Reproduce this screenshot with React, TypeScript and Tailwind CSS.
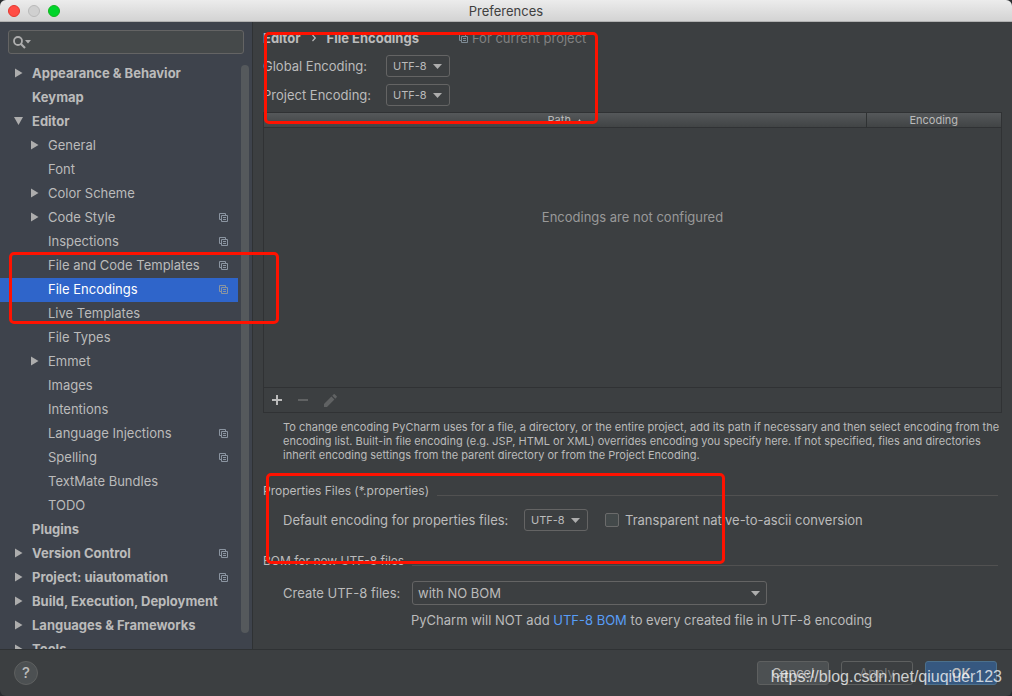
import { useState } from 'react'
import { clsx } from 'clsx'

type TreeItem = {
  title: string
  level: 0 | 1
  arrow?: 'open' | 'closed'
  shared?: boolean
}

const treeItems: TreeItem[] = [
  { title: 'Appearance & Behavior', level: 0, arrow: 'closed' },
  { title: 'Keymap', level: 0 },
  { title: 'Editor', level: 0, arrow: 'open' },
  { title: 'General', level: 1, arrow: 'closed' },
  { title: 'Font', level: 1 },
  { title: 'Color Scheme', level: 1, arrow: 'closed' },
  { title: 'Code Style', level: 1, arrow: 'closed', shared: true },
  { title: 'Inspections', level: 1, shared: true },
  { title: 'File and Code Templates', level: 1, shared: true },
  { title: 'File Encodings', level: 1, shared: true },
  { title: 'Live Templates', level: 1 },
  { title: 'File Types', level: 1 },
  { title: 'Emmet', level: 1, arrow: 'closed' },
  { title: 'Images', level: 1 },
  { title: 'Intentions', level: 1 },
  { title: 'Language Injections', level: 1, shared: true },
  { title: 'Spelling', level: 1, shared: true },
  { title: 'TextMate Bundles', level: 1 },
  { title: 'TODO', level: 1 },
  { title: 'Plugins', level: 0 },
  { title: 'Version Control', level: 0, arrow: 'closed', shared: true },
  { title: 'Project: uiautomation', level: 0, arrow: 'closed', shared: true },
  { title: 'Build, Execution, Deployment', level: 0, arrow: 'closed' },
  { title: 'Languages & Frameworks', level: 0, arrow: 'closed' },
  { title: 'Tools', level: 0, arrow: 'closed' },
]

export default function App() {
  return (
    <div className="relative h-screen bg-[#2a2d30] font-['Inter','Liberation_Sans',sans-serif] text-[13px] leading-4 text-[#bbbbbb]">
      <div className="flex h-full flex-col overflow-hidden rounded-md bg-[#3c3f41]">
        <TitleBar />
        <div className="flex min-h-0 flex-1">
          <Sidebar />
          <EncodingSettings />
        </div>
        <Footer />
      </div>

      {/* Highlight marks */}
      <div className="pointer-events-none absolute top-[32px] left-[264px] h-[92px] w-[334px] rounded-[5px] border-3 border-[#ff1200]" />
      <div className="pointer-events-none absolute top-[252px] left-[9px] h-[72px] w-[270px] rounded-[5px] border-3 border-[#ff1200]" />
      <div className="pointer-events-none absolute top-[473px] left-[266px] h-[91px] w-[459px] rounded-[5px] border-3 border-[#ff1200]" />
      <span className="pointer-events-none absolute right-[10px] bottom-[9px] font-['Liberation_Sans',sans-serif] text-base leading-5 text-white/75">
        https://blog.csdn.net/qiuqiuer123
      </span>
    </div>
  )
}

function TitleBar() {
  return (
    <header className="relative flex h-[22px] shrink-0 items-center justify-center border-b border-[#b1b1b1] bg-linear-to-b from-[#ececec] to-[#d3d3d3] text-[#404040]">
      <div className="absolute left-2 flex gap-2">
        <button aria-label="Close" className="size-3 rounded-full border border-[#e2382f] bg-[#ff4d45]" />
        <button aria-label="Minimize" className="size-3 rounded-full border border-[#b9b9b9] bg-[#d0d0d0]" />
        <button aria-label="Zoom" className="size-3 rounded-full border border-[#12b41f] bg-[#00d52b]" />
      </div>
      <h1>Preferences</h1>
    </header>
  )
}

function Sidebar() {
  const [selected, setSelected] = useState('File Encodings')

  return (
    <aside className="relative flex w-[253px] shrink-0 flex-col border-r border-[#2f3234] bg-[#3e434c]">
      <div className="px-2 pt-2">
        <label className="flex h-6 w-[236px] items-center rounded-[3px] border border-[#646464] bg-[#45494a] pl-1">
          <SearchIcon />
          <input type="text" aria-label="Search settings" className="min-w-0 flex-1 bg-transparent px-1 outline-none" />
        </label>
      </div>
      <nav className="mt-2 min-h-0 flex-1 overflow-hidden">
        {treeItems.map((item) => {
          const isSelected = item.title === selected
          return (
            <button
              key={item.title}
              onClick={() => setSelected(item.title)}
              className={clsx(
                'flex h-6 w-[238px] items-center pr-2.5 pb-0.5 text-left whitespace-nowrap',
                item.level === 0 ? 'pl-3.5 font-bold' : 'pl-[30px]',
                isSelected && 'bg-[#2f65ca] text-white',
              )}
            >
              <span className="flex w-[18px] shrink-0">{item.arrow && <TreeArrow open={item.arrow === 'open'} />}</span>
              <span className="flex-1">{item.title}</span>
              {item.shared && <ProjectIcon className="text-[#8b95a1]" />}
            </button>
          )
        })}
      </nav>
      <div className="absolute top-[43px] right-[3px] bottom-4 w-2 rounded-full bg-[#55595c]" />
    </aside>
  )
}

function EncodingSettings() {
  return (
    <main className="flex min-w-0 flex-1 flex-col pt-2 pr-2.5 pb-[21px] pl-2.5">
      <div className="flex shrink-0 items-center font-bold">
        <span>Editor</span>
        <svg width="6" height="8" viewBox="0 0 6 8" className="mx-2.5" fill="none" stroke="#bbbbbb" strokeWidth="1.2">
          <path d="M1.5 1 4.3 4 1.5 7" />
        </svg>
        <h2>File Encodings</h2>
        <span className="ml-10 flex items-center gap-1 font-normal text-[#808080]">
          <ProjectIcon className="text-[#7e8b95]" />
          For current project
        </span>
      </div>

      <div className="mt-[9px] grid shrink-0 grid-cols-[123px_auto] items-center justify-start gap-y-[7px]">
        <label htmlFor="global-encoding">Global Encoding:</label>
        <EncodingSelect id="global-encoding" />
        <label htmlFor="project-encoding">Project Encoding:</label>
        <EncodingSelect id="project-encoding" />
      </div>

      <div className="mt-1.5 flex min-h-0 flex-1 flex-col border border-[#303234]">
        <div className="min-h-0 flex-1">
          <table className="h-full w-full table-fixed border-collapse">
            <thead className="text-[11px] leading-[13px]">
              <tr className="h-3.5 border-b border-[#303234] bg-linear-to-b from-[#55585a] to-[#414445]">
                <th className="border-r border-[#2f3233] p-0 pt-px font-normal">
                  <span className="inline-flex items-center gap-1.5">
                    Path
                    <svg width="5" height="4" viewBox="0 0 5 4" fill="#bbbbbb">
                      <path d="M2.5 0 5 4H0z" />
                    </svg>
                  </span>
                </th>
                <th className="w-[135px] p-0 pt-px font-normal">Encoding</th>
              </tr>
            </thead>
            <tbody>
              <tr>
                <td colSpan={2} className="p-0 pt-[81px] text-center align-top text-[#999999]">
                  Encodings are not configured
                </td>
              </tr>
            </tbody>
          </table>
        </div>
        <div className="flex h-[25px] shrink-0 items-center gap-4 border-t border-[#303234] pl-2">
          <button aria-label="Add">
            <svg width="10" height="10" viewBox="0 0 10 10" fill="#bbbbbb">
              <path d="M4 0h2v4h4v2H6v4H4V6H0V4h4z" />
            </svg>
          </button>
          <button aria-label="Remove" disabled>
            <svg width="10" height="10" viewBox="0 0 10 10" fill="#606263">
              <path d="M0 4h10v2H0z" />
            </svg>
          </button>
          <button aria-label="Edit" disabled>
            <svg width="13" height="13" viewBox="0 0 13 13" fill="#606263">
              <path d="M0 10 7.4 2.6l3 3L3 13H0zM8.3 1.7 9.7.3q.5-.5 1 0l2 2q.5.5 0 1l-1.4 1.4z" />
            </svg>
          </button>
        </div>
      </div>

      <p className="mt-[7px] shrink-0 pl-5 text-[11px] leading-[14px] whitespace-nowrap">
        To change encoding PyCharm uses for a file, a directory, or the entire project, add its path if necessary and then select encoding from the
        <br />
        encoding list. Built-in file encoding (e.g. JSP, HTML or XML) overrides encoding you specify here. If not specified, files and directories
        <br />
        inherit encoding settings from the parent directory or from the Project Encoding.
      </p>

      <SectionTitle className="mt-[21px]">Properties Files (*.properties)</SectionTitle>
      <div className="mt-2.5 flex shrink-0 items-center pl-5">
        <label htmlFor="properties-encoding" className="w-[241px]">
          Default encoding for properties files:
        </label>
        <EncodingSelect id="properties-encoding" />
        <label className="ml-[17px] flex items-center gap-1.5">
          <input type="checkbox" className="size-3.5 appearance-none rounded-xs border border-[#6b6b6b] bg-[#43494a] checked:bg-[#2f65ca]" />
          Transparent native-to-ascii conversion
        </label>
      </div>

      <SectionTitle className="mt-[22px]">BOM for new UTF-8 files</SectionTitle>
      <div className="mt-3 flex shrink-0 items-center pl-5">
        <label htmlFor="bom" className="w-[129px]">
          Create UTF-8 files:
        </label>
        <div className="relative">
          <select id="bom" className="block h-6 w-[355px] appearance-none rounded-[3px] border border-[#646464] bg-[#3c3f41] pl-[5px] outline-none">
            <option>with NO BOM</option>
            <option>with BOM</option>
          </select>
          <DownArrow className="right-[7px]" />
        </div>
      </div>
      <p className="mt-[7px] shrink-0 pl-[148px]">
        PyCharm will NOT add{' '}
        <a href="#bom" className="text-[#589df6]">
          UTF-8 BOM
        </a>{' '}
        to every created file in UTF-8 encoding
      </p>
    </main>
  )
}

function EncodingSelect({ id }: { id: string }) {
  return (
    <div className="relative w-16">
      <select id={id} className="block h-[22px] w-full appearance-none rounded-[3px] border border-[#646464] bg-[#3c3f41] pl-1.5 text-[11px] outline-none">
        <option>UTF-8</option>
        <option>GBK</option>
      </select>
      <DownArrow className="right-2" />
    </div>
  )
}

function SectionTitle({ children, className }: { children: React.ReactNode; className: string }) {
  return (
    <div className={clsx('flex shrink-0 items-center gap-2 pr-1 text-[12px] leading-4', className)}>
      <h3>{children}</h3>
      <div className="mt-2 h-px flex-1 bg-[#515151]" />
    </div>
  )
}

function Footer() {
  return (
    <footer className="flex h-[47px] shrink-0 items-center gap-3 border-t border-[#2f3234] pr-[15px] pl-3.5 text-[13px]">
      <button aria-label="Help" className="mr-auto size-6 rounded-full border border-[#5e6060] bg-[#4c5052] text-[15px] leading-5 font-medium">
        ?
      </button>
      <button className="h-6 w-[72px] rounded-[3px] border border-[#5e6060] bg-[#4c5052]">Cancel</button>
      <button disabled className="h-6 w-[72px] rounded-[3px] border border-[#5e6060] text-[#777777]">
        Apply
      </button>
      <button className="h-6 w-[72px] rounded-[3px] border border-[#4c708c] bg-[#365880] font-semibold">OK</button>
    </footer>
  )
}

function SearchIcon() {
  return (
    <svg width="18" height="13" viewBox="0 0 18 13" fill="none">
      <circle cx="5" cy="5" r="4" stroke="#adadad" strokeWidth="1.8" />
      <path d="m8 8 4 4" stroke="#adadad" strokeWidth="2.2" />
      <path d="M12 4h6l-3 3.5z" fill="#adadad" />
    </svg>
  )
}

function TreeArrow({ open }: { open: boolean }) {
  return (
    <svg width="9" height="10" viewBox="0 0 9 10" fill="#adadad">
      {open ? <path d="M0 1h9L4.5 9z" /> : <path d="M1 .5 8.5 5 1 9.5z" />}
    </svg>
  )
}

function DownArrow({ className }: { className: string }) {
  return (
    <svg width="9" height="5" viewBox="0 0 9 5" fill="#adadad" className={clsx('pointer-events-none absolute inset-y-0 my-auto', className)}>
      <path d="M0 0h9L4.5 5z" />
    </svg>
  )
}

function ProjectIcon({ className }: { className: string }) {
  return (
    <svg width="9" height="9" viewBox="0 0 9 9" fill="none" stroke="currentColor" className={clsx('shrink-0', className)}>
      <path d="M2 6.5H.5v-6h6V2" />
      <path d="M2.5 2.5h6v6h-6zM4 4.5h3M4 6.5h3" />
    </svg>
  )
}
